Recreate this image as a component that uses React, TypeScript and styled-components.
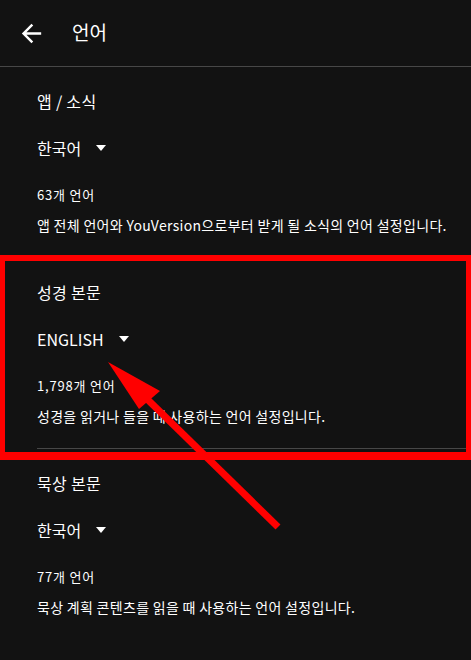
import React from 'react';
import styled, { createGlobalStyle } from 'styled-components';

const GlobalStyle = createGlobalStyle`
    html, body {
        margin: 0;
        padding: 0;
        background-color: #121212;
    }
    body {
        font-family: "Noto Sans CJK KR", "Noto Sans", sans-serif;
        color: #fff;
    }
`;

const Page = styled.div`
    position: relative;
    width: 471px;
    height: 660px;
    overflow: hidden;
    background-color: #121212;
`;

const Header = styled.header`
    height: 66px;
    display: flex;
    align-items: center;
    border-bottom: 1px solid #474747;
    box-sizing: content-box;
`;

const BackButton = styled.button`
    width: 29px;
    height: 29px;
    margin-left: 17px;
    padding: 0;
    border: 0;
    background: none;
    color: #fff;
    display: flex;
    align-items: center;
    justify-content: center;
    svg {
        width: 29px;
        height: 29px;
        display: block;
    }
`;

const Title = styled.h1`
    margin: 0 0 2px 26px;
    font-size: 19px;
    font-weight: 400;
    line-height: 24px;
`;

const Section = styled.section`
    margin-left: 37px;
    padding: 24px 0 23px 0;
    border-bottom: 1px solid #474747;
    &:last-of-type {
        border-bottom-color: transparent;
    }
`;

const SectionTitle = styled.h2`
    margin: 0;
    height: 20px;
    font-size: 16px;
    font-weight: 400;
    line-height: 20px;
    letter-spacing: 0.3px;
`;

const Dropdown = styled.div`
    margin-top: 25px;
    height: 24px;
    display: flex;
    align-items: center;
    font-size: 16px;
    font-weight: 400;
    line-height: 24px;
`;

const Caret = styled.span`
    width: 0;
    height: 0;
    margin-left: 15px;
    border-left: 5.5px solid transparent;
    border-right: 5.5px solid transparent;
    border-top: 6px solid #fff;
`;

const Count = styled.div`
    margin-top: 27px;
    height: 16px;
    font-size: 13px;
    line-height: 16px;
    letter-spacing: 0.8px;
`;

const Description = styled.p`
    margin: 13px 0 0 0;
    height: 18px;
    font-size: 14px;
    line-height: 18px;
    letter-spacing: 0.3px;
    white-space: nowrap;
`;

const Highlight = styled.div`
    position: absolute;
    left: 0;
    top: 255px;
    width: 471px;
    height: 205px;
    box-sizing: border-box;
    border-style: solid;
    border-color: #ff0000;
    border-width: 6px 5px 8px 5px;
    pointer-events: none;
`;

const Pointer = styled.svg`
    position: absolute;
    left: 0;
    top: 0;
    pointer-events: none;
`;

const SECTIONS = [
    {
        title: '앱 / 소식',
        value: '한국어',
        count: '63개 언어',
        text: '앱 전체 언어와 YouVersion으로부터 받게 될 소식의 언어 설정입니다.',
    },
    {
        title: '성경 본문',
        value: 'ENGLISH',
        count: '1,798개 언어',
        text: '성경을 읽거나 들을 때 사용하는 언어 설정입니다.',
    },
    {
        title: '묵상 본문',
        value: '한국어',
        count: '77개 언어',
        text: '묵상 계획 콘텐츠를 읽을 때 사용하는 언어 설정입니다.',
    },
];

function App() {
    return (
        <Page>
            <GlobalStyle />
            <Header>
                <BackButton aria-label="back">
                    <svg viewBox="0 0 24 24" fill="currentColor">
                        <path d="M20 11H7.83l5.59-5.59L12 4l-8 8 8 8 1.41-1.41L7.83 13H20v-2z" />
                    </svg>
                </BackButton>
                <Title>언어</Title>
            </Header>

            {SECTIONS.map((s) => (
                <Section key={s.title}>
                    <SectionTitle>{s.title}</SectionTitle>
                    <Dropdown>
                        {s.value}
                        <Caret />
                    </Dropdown>
                    <Count>{s.count}</Count>
                    <Description>{s.text}</Description>
                </Section>
            ))}

            <Highlight />
            <Pointer width="471" height="660" viewBox="0 0 471 660">
                <line x1="146" y1="398" x2="278" y2="527" stroke="#ff0000" strokeWidth="7" />
                <polygon points="108,362 160,391 139,409" fill="#ff0000" />
            </Pointer>
        </Page>
    );
}

export default App;
